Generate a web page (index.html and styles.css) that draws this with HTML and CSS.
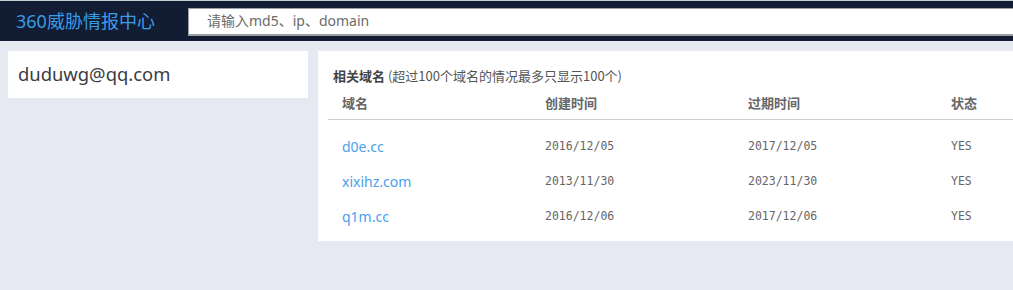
FILE: index.html
```html
<!DOCTYPE html>
<html lang="zh-CN">
<head>
<meta charset="utf-8">
<title>360威胁情报中心</title>
<link rel="stylesheet" href="styles.css">
</head>
<body>
<header class="topbar">
  <div class="brand">360威胁情报中心</div>
  <div class="search"><span class="placeholder">请输入md5、ip、domain</span></div>
</header>
<main class="main">
  <aside class="side-card">duduwg@qq.com</aside>
  <section class="panel">
    <div class="panel-title"><b>相关域名</b> (超过100个域名的情况最多只显示100个)</div>
    <table class="domains">
      <thead>
        <tr><th>域名</th><th>创建时间</th><th>过期时间</th><th>状态</th></tr>
      </thead>
      <tbody>
        <tr class="spacer"><td colspan="4"></td></tr>
        <tr><td><a class="link">d0e.cc</a></td><td class="mono">2016/12/05</td><td class="mono">2017/12/05</td><td class="mono">YES</td></tr>
        <tr><td><a class="link">xixihz.com</a></td><td class="mono">2013/11/30</td><td class="mono">2023/11/30</td><td class="mono">YES</td></tr>
        <tr><td><a class="link">q1m.cc</a></td><td class="mono">2016/12/06</td><td class="mono">2017/12/06</td><td class="mono">YES</td></tr>
      </tbody>
    </table>
  </section>
</main>
</body>
</html>
```

FILE: styles.css
```css
html, body {
  margin: 0;
  padding: 0;
  overflow: hidden;
}
body {
  background: #e6e9f1;
  font-family: "Noto Sans", "Noto Sans CJK SC", sans-serif;
  color: #333;
  width: 1013px;
  height: 290px;
}
.topbar {
  display: flex;
  align-items: center;
  border-top: 1px solid #c9ccd2;
  background: #121d33;
  box-sizing: border-box;
  height: 41px;
}
.brand {
  width: 172px;
  padding-left: 16px;
  flex: none;
  color: #3a9be8;
  font-size: 18px;
  line-height: 24px;
}
.search {
  flex: 1;
  min-width: 0;
  height: 28px;
  margin-top: 1px;
  background: #fff;
  border: 1px solid #9a9ea6;
  border-right: none;
  border-bottom-width: 2px;
  box-sizing: border-box;
  display: flex;
  align-items: center;
  padding-left: 18px;
}
.placeholder {
  color: #6b6b6b;
  font-size: 14px;
  line-height: 20px;
}
.main {
  display: flex;
  align-items: flex-start;
  gap: 10px;
  padding: 10px 0 10px 8px;
}
.side-card {
  flex: none;
  width: 300px;
  height: 47px;
  box-sizing: border-box;
  background: #fff;
  padding: 10px 10px;
  font-size: 18.4px;
  line-height: 26px;
  color: #3c3c44;
}
.panel {
  flex: 1;
  min-width: 0;
  overflow: hidden;
  background: #fff;
  padding: 15px 0 8px 10px;
}
.panel-title {
  padding-left: 5px;
  font-size: 13px;
  line-height: 20px;
  color: #555;
  font-family: "Noto Sans CJK SC", "Noto Sans", sans-serif;
}
.panel-title b {
  color: #444;
}
.domains {
  border-collapse: collapse;
  width: 812px;
  table-layout: fixed;
}
.domains th {
  text-align: left;
  height: 33px;
  padding: 0 0 0 14px;
  font-size: 13px;
  font-weight: bold;
  color: #666;
  border-bottom: 1px solid #cccccc;
  font-family: "Noto Sans CJK SC", "Noto Sans", sans-serif;
  vertical-align: middle;
}
.domains td {
  height: 35px;
  padding: 0 0 0 14px;
  vertical-align: middle;
}
.domains .spacer td {
  height: 8px;
}
.link {
  color: #4aa0ec;
  font-size: 14px;
  font-family: "Noto Sans", sans-serif;
}
.mono {
  font-family: "DejaVu Sans Mono", monospace;
  font-size: 11.5px;
  color: #666;
}
```
